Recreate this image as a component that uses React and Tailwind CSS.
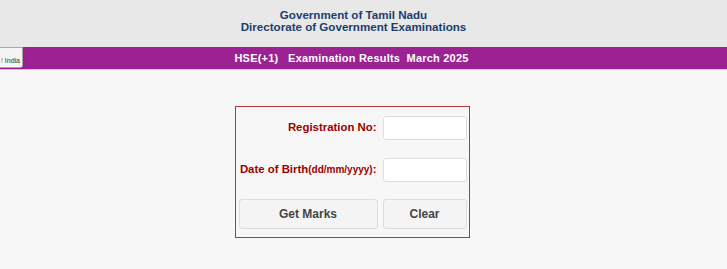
export default function App() {
  return (
    <div className="min-h-[269px] w-full bg-[#f7f7f7] font-['Liberation_Sans',Arial,sans-serif]">
      <div className="relative">
        <div className="h-[47px] bg-[#e8e8e8] flex flex-col items-center pt-[9px] pr-[20px] text-[11.6px] font-bold leading-[12px] text-[#1c3d6e]">
          <div>Government of Tamil Nadu</div>
          <div>Directorate of Government Examinations</div>
        </div>
        <div className="h-[23px] bg-[#9c2193] border-b border-[#d6c2d4] flex items-center justify-center pr-[24px]">
          <span className="whitespace-pre text-[11px] font-bold text-white tracking-[0.2px]">
            HSE(+1)   Examination Results  March 2025
          </span>
        </div>
        <div className="absolute left-0 top-[47px] h-[21px] w-[23px] overflow-hidden rounded-br-[3px] border border-l-0 border-[#a8a8a8] bg-[#f4f4f4] shadow-sm">
          <div className="absolute right-[2px] top-[9px] whitespace-nowrap text-[7px] leading-[8px] text-[#333]">
            <span className="text-[#d08a3a]">f</span> India
          </div>
        </div>
      </div>

      <div className="flex justify-center pt-[36px] pb-[31px]">
        <div className="ml-[-23px] w-[235px] border border-[#b03a3a] px-[3px] pt-[9px] pb-[8px]">
          <div className="grid grid-cols-[138px_84px] gap-x-[6px] items-center">
            <label className="text-right text-[11.4px] font-bold text-[#9b0000] whitespace-nowrap">
              Registration No:
            </label>
            <input className="h-[24px] w-[84px] rounded-[3px] border border-[#dedede] bg-white outline-none" />
            <div className="col-span-2 h-[18px]" />
            <label className="text-right text-[11.4px] font-bold text-[#9b0000] whitespace-nowrap">
              Date of Birth<span className="text-[10px]">(dd/mm/yyyy)</span>:
            </label>
            <input className="h-[24px] w-[84px] rounded-[3px] border border-[#dedede] bg-white outline-none" />
            <div className="col-span-2 h-[17px]" />
            <button className="h-[30px] w-[139px] rounded-[3px] border border-[#dcdcdc] bg-[#f4f4f4] text-[12px] font-bold text-[#444]">
              Get Marks
            </button>
            <button className="h-[30px] w-[84px] rounded-[3px] border border-[#dcdcdc] bg-[#f4f4f4] text-[12px] font-bold text-[#444]">
              Clear
            </button>
          </div>
        </div>
      </div>
    </div>
  );
}
